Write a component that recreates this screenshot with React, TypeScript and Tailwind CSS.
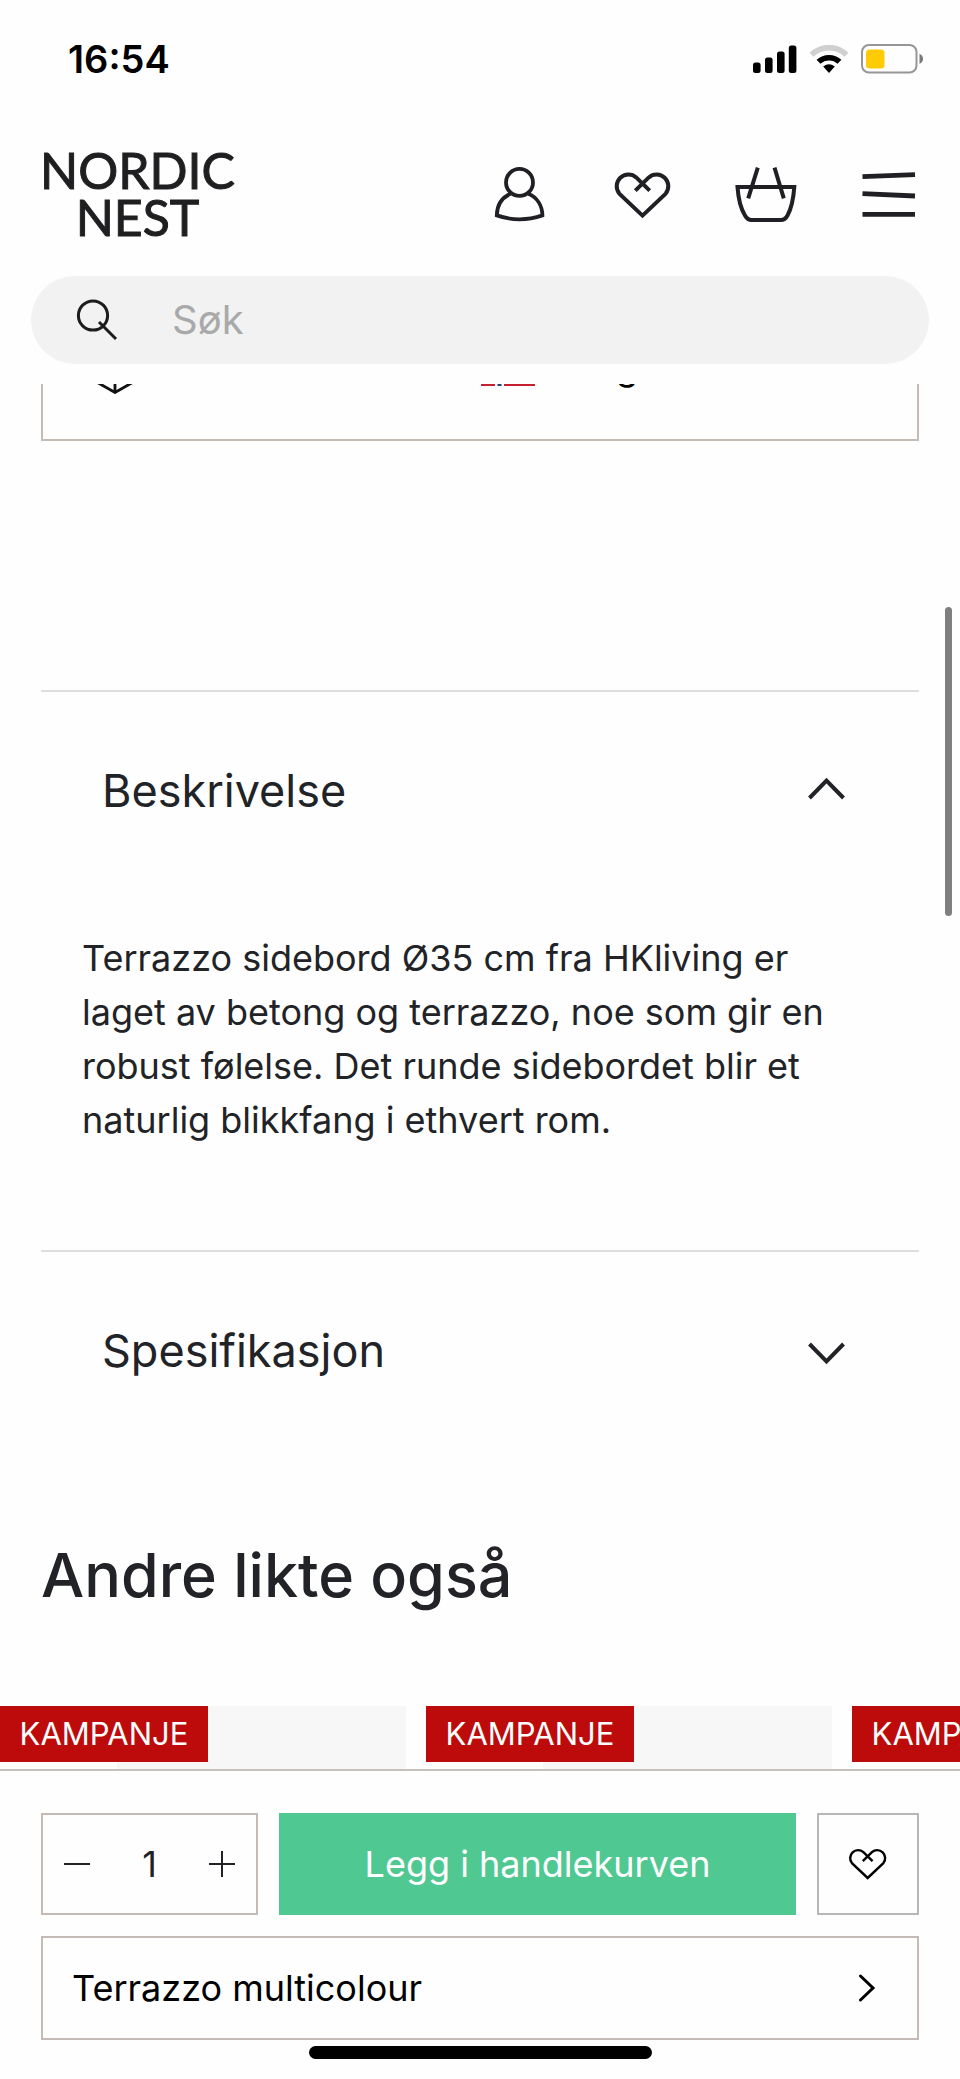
// src/App.tsx
import { useState } from "react";
import type { ReactNode } from "react";

const products = ["a", "b", "c"];

function HeartIcon({ className, strokeWidth }: { className: string; strokeWidth: number }) {
  return (
    <svg viewBox="0 0 62 62" fill="none" stroke="currentColor" strokeWidth={strokeWidth} className={className} aria-hidden="true">
      <path d="M37.7 26.6 24.2 13.4A11.75 11.75 0 0 0 7.3 29.6L30.5 51.6 53.7 29.6A11.75 11.75 0 0 0 36.8 13.4L23.3 26.6" />
    </svg>
  );
}

function StatusBar() {
  return (
    <div className="flex h-[118px] items-center justify-between pl-[68px] pr-[36px] text-black">
      <span className="text-[38px] font-semibold leading-[48px]">16:54</span>
      <div className="flex items-center gap-[12px]">
        {/* signal */}
        <svg viewBox="0 0 44 28" className="h-[28px] w-[44px]" fill="currentColor" aria-hidden="true">
          <rect x="0" y="17.5" width="7.6" height="10.5" rx="2.5" />
          <rect x="12" y="12.5" width="7.6" height="15.5" rx="2.5" />
          <rect x="24" y="6.5" width="7.6" height="21.5" rx="2.5" />
          <rect x="35.8" y="0.5" width="7.6" height="27.5" rx="2.5" />
        </svg>
        {/* wifi */}
        <svg viewBox="0 0 40 28" className="h-[28px] w-[40px]" fill="none" strokeWidth="5.6" aria-hidden="true">
          <path d="M2.5 9.8a25 25 0 0 1 35 0" stroke="#d0d0d0" />
          <path d="M9.5 16.8a15.5 15.5 0 0 1 21 0" stroke="#000" />
          <path d="M14.2 21.6Q20 16.8 25.8 21.6L20 28Z" fill="#000" />
        </svg>
        {/* battery */}
        <svg viewBox="0 0 63 30" className="h-[30px] w-[63px]" aria-hidden="true">
          <rect x="1" y="1" width="54.5" height="27.5" rx="7" fill="none" stroke="#969696" strokeWidth="2" />
          <rect x="5" y="5.5" width="18.5" height="19" rx="3.5" fill="#fecb05" />
          <path d="M58.5 9.8q3.5 1.5 3.5 5t-3.5 5z" fill="#7a7a7a" />
        </svg>
      </div>
    </div>
  );
}

function Header() {
  return (
    <header>
      <StatusBar />
      <div className="flex h-[154px] items-center justify-between px-[40px]">
        <a href="#" className="pb-[2px] text-center font-['Lato',sans-serif] text-[50px] leading-[47px] text-[#1f1f21] [-webkit-text-stroke:1px_#1f1f21]">
          NORDIC
          <br />
          NEST
        </a>
        <nav className="flex gap-[61px] text-[#202024]">
          <button type="button" aria-label="Min side">
            <svg viewBox="0 0 62 62" fill="none" stroke="currentColor" strokeWidth="3.8" className="size-[62px]" aria-hidden="true">
              <circle cx="30.5" cy="18.4" r="13.5" />
              <path d="M21.5 29.8C13 33.5 8 41.5 7.8 51.4Q30.5 59.3 53.4 51.4C53.2 41.5 48 33.5 39.5 29.8" />
            </svg>
          </button>
          <button type="button" aria-label="Favoritter">
            <HeartIcon className="size-[62px]" strokeWidth={4} />
          </button>
          <button type="button" aria-label="Handlekurv">
            <svg viewBox="0 0 62 62" fill="none" stroke="currentColor" strokeWidth="4" className="size-[62px]" aria-hidden="true">
              <path d="M2.5 23H59.3C58.3 37 56 45 52.5 51.5Q50 56 46 56H16.5Q12.5 56 10 51.5C6 45 3.5 37 2.5 23Z" />
              <path d="M22.8 3.7 13.2 34.3M39.5 3.7 48.8 34.3" />
            </svg>
          </button>
          <button type="button" aria-label="Meny">
            <svg viewBox="0 0 62 62" fill="none" stroke="currentColor" strokeWidth="4.8" className="size-[62px]" aria-hidden="true">
              <path d="M4.5 12.7 57 10.7M4.5 29.7 57 32M4.5 50.3H57" />
            </svg>
          </button>
        </nav>
      </div>
      <div className="px-[31px] pb-[20px] pt-[4px]">
        <label className="flex h-[88px] items-center gap-[55px] rounded-full bg-[#f2f2f2] pl-[46px] pr-[40px]">
          <svg viewBox="0 0 40 40" fill="none" stroke="#1c1c1c" strokeWidth="3" className="size-[40px] shrink-0 overflow-visible" aria-hidden="true">
            <circle cx="16" cy="15.5" r="14.6" />
            <path d="M22 22 39 39" />
          </svg>
          <input
            type="search"
            aria-label="Søk"
            placeholder="Søk"
            className="w-full min-w-0 bg-transparent text-[40px] leading-[54px] outline-none placeholder:text-[#a9a9a9]"
          />
        </label>
      </div>
    </header>
  );
}

// Shipping box, scrolled halfway in under the header
function ShippingBox() {
  return (
    <div className="mx-[41px] h-[57px] overflow-hidden border-x-2 border-b-2 border-[#c4bbb7]">
      <div className="-mt-[44px] flex h-[54px] items-end">
        <svg viewBox="0 0 46 54" fill="none" stroke="#111" strokeWidth="2.8" className="ml-[49px] h-[54px] w-[46px]" aria-hidden="true">
          <path d="M2 15 23 3 44 15V40.5L23 52.5 2 40.5ZM2 15 23 27 44 15M23 27V52.5" />
        </svg>
        <svg viewBox="0 0 54 40" className="mb-[8px] ml-[343px] h-[40px] w-[54px]" aria-hidden="true">
          <path d="M0 0H54V40H0Z" fill="#c4202f" />
          <path d="M14 0H23V40H14ZM0 15H54V25H0Z" fill="#fff" />
          <path d="M16.5 0H20.5V40H16.5ZM0 18H54V22H0Z" fill="#22407c" />
        </svg>
        <span className="ml-[81px] text-[36px] leading-[54px] text-black">g</span>
      </div>
    </div>
  );
}

function Section({ title, initial, children }: { title: string; initial: boolean; children?: ReactNode }) {
  const [open, setOpen] = useState(initial);
  return (
    <section className="border-t-2 border-[#dedede]">
      <h2>
        <button
          type="button"
          aria-expanded={open}
          onClick={() => setOpen(!open)}
          className="flex h-[198px] w-full items-center justify-between pl-[61px] pr-[73px] text-left text-[45px] leading-[56px]"
        >
          {title}
          <svg viewBox="0 0 40 40" fill="none" stroke="currentColor" strokeWidth="4" className="size-[40px]" aria-hidden="true">
            <path d={open ? "M3.5 27 20.5 9.5 37.5 27" : "M3.5 13 20.5 30.5 37.5 13"} />
          </svg>
        </button>
      </h2>
      {open && children}
    </section>
  );
}

function BuyBar() {
  const [count, setCount] = useState(1);
  return (
    <footer className="border-t-2 border-[#c9c0bb] px-[41px] pb-[20px] pt-[42px]">
      <div className="flex h-[102px] gap-[21px]">
        <div className="flex w-[217px] items-center justify-between border-2 border-[#c4bbb7] px-[20px] text-[#202124]">
          <button type="button" aria-label="Færre" onClick={() => setCount(Math.max(1, count - 1))}>
            <svg viewBox="0 0 28 28" stroke="currentColor" strokeWidth="2" className="size-[28px]" aria-hidden="true">
              <path d="M1 14H27" />
            </svg>
          </button>
          <span className="text-[36px] leading-[54px]">{count}</span>
          <button type="button" aria-label="Flere" onClick={() => setCount(count + 1)}>
            <svg viewBox="0 0 28 28" stroke="currentColor" strokeWidth="2" className="size-[28px]" aria-hidden="true">
              <path d="M1 14H27M14 1V27" />
            </svg>
          </button>
        </div>
        <button type="button" className="flex-1 bg-[#50c892] text-[36px] leading-[54px] text-white">
          Legg i handlekurven
        </button>
        <button type="button" aria-label="Legg til i favoritter" className="flex w-[102px] items-center justify-center border-2 border-[#b7b7b7] text-black">
          <HeartIcon className="size-[42px]" strokeWidth={3.6} />
        </button>
      </div>
      <button type="button" className="mt-[21px] flex h-[104px] w-full items-center justify-between border-2 border-[#c4bbb7] pl-[29px] pr-[36px] text-[36px] leading-[54px] text-black">
        Terrazzo multicolour
        <svg viewBox="0 0 28 28" fill="none" stroke="currentColor" strokeWidth="3" strokeLinecap="round" className="size-[28px]" aria-hidden="true">
          <path d="M7.5 2 20 14 7.5 26" />
        </svg>
      </button>
      {/* home indicator */}
      <div className="mx-auto mt-[6px] h-[13px] w-[343px] rounded-full bg-black" />
    </footer>
  );
}

export default function App() {
  return (
    <div className="relative min-h-screen overflow-hidden bg-[#fefefe] font-['Inter',sans-serif] text-[#212327]">
      <Header />
      <main>
        <ShippingBox />
        <div className="mx-[41px] mt-[249px]">
          <Section title="Beskrivelse" initial={true}>
            <p className="px-[41px] pb-[103px] pt-[41px] text-[36px] leading-[54px]">
              Terrazzo sidebord Ø35 cm fra HKliving er laget av betong og terrazzo, noe som gir en robust følelse. Det runde sidebordet blir et naturlig blikkfang i ethvert rom.
            </p>
          </Section>
          <Section title="Spesifikasjon" initial={false} />
        </div>
        <h2 className="mx-[41px] mb-[93px] mt-[87px] text-[61px] font-medium leading-[76px]">Andre likte også</h2>
        <div className="flex gap-[20px] overflow-hidden">
          {products.map((id) => (
            <a key={id} href="#" className="flex h-[63px] w-[406px] shrink-0 flex-col bg-[#f7f7f7]">
              <span className="flex h-[56px] w-[208px] items-center justify-center bg-[#bd0b0b] text-[31px] leading-[40px] text-white">
                KAMPANJE
              </span>
              <span className="w-[117px] flex-1 bg-white" />
            </a>
          ))}
        </div>
      </main>
      <BuyBar />
      {/* scroll thumb */}
      <div className="absolute right-[8px] top-[607px] h-[309px] w-[7px] rounded-full bg-[#7f7f7f]" />
    </div>
  );
}
